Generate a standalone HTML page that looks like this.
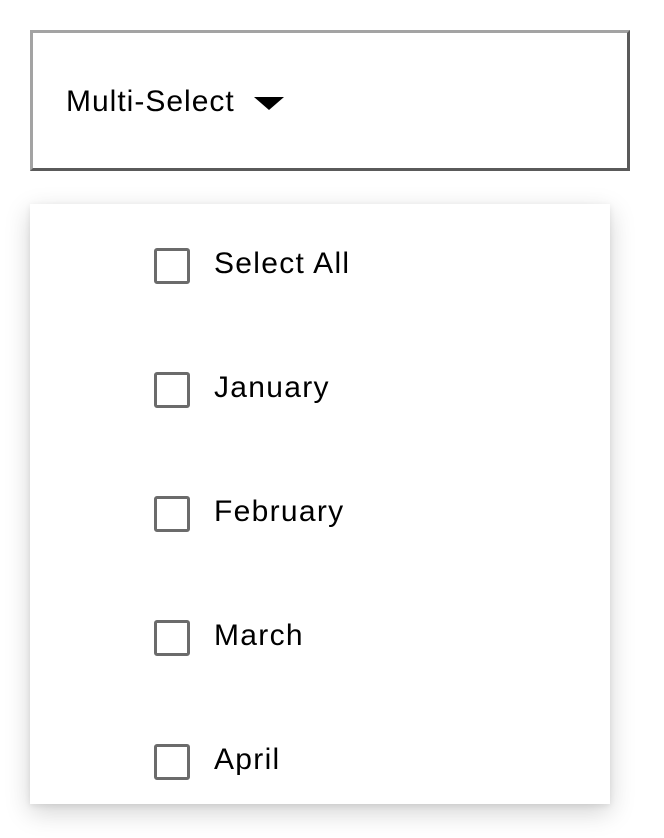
<html><head><style>
body{margin:0;background:#fff;font-family:"Liberation Sans",Arial,sans-serif;color:#000}
.btn{position:absolute;left:30px;top:30px;width:594px;height:135px;border:3px solid;border-color:#a3a3a3 #5a5a5a #5a5a5a #a3a3a3;background:#fff}
.btn span{position:absolute;left:33px;top:51px;font-size:30px;line-height:36px;letter-spacing:1px}
.tri{position:absolute;left:221px;top:64px;width:0;height:0;border-left:15px solid transparent;border-right:15px solid transparent;border-top:13px solid #000}
.menu{position:absolute;left:30px;top:204px;width:580px;height:600px;background:#fff;box-shadow:0 8px 24px rgba(0,0,0,.18),0 2px 6px rgba(0,0,0,.08)}
.row{position:absolute;left:124px;height:36px}
.cb{position:absolute;left:0;top:0;width:30px;height:30px;border:3px solid #6b6b6b;border-radius:3px}
.row span{position:absolute;left:60px;top:-2px;font-size:30px;line-height:36px;white-space:nowrap;letter-spacing:1.3px}
</style></head><body>
<div class="btn"><span>Multi-Select</span><div class="tri"></div></div>
<div class="menu">
<div class="row" style="top:44px"><div class="cb"></div><span>Select All</span></div>
<div class="row" style="top:168px"><div class="cb"></div><span>January</span></div>
<div class="row" style="top:292px"><div class="cb"></div><span>February</span></div>
<div class="row" style="top:416px"><div class="cb"></div><span>March</span></div>
<div class="row" style="top:540px"><div class="cb"></div><span>April</span></div>
</div>
</body></html>
